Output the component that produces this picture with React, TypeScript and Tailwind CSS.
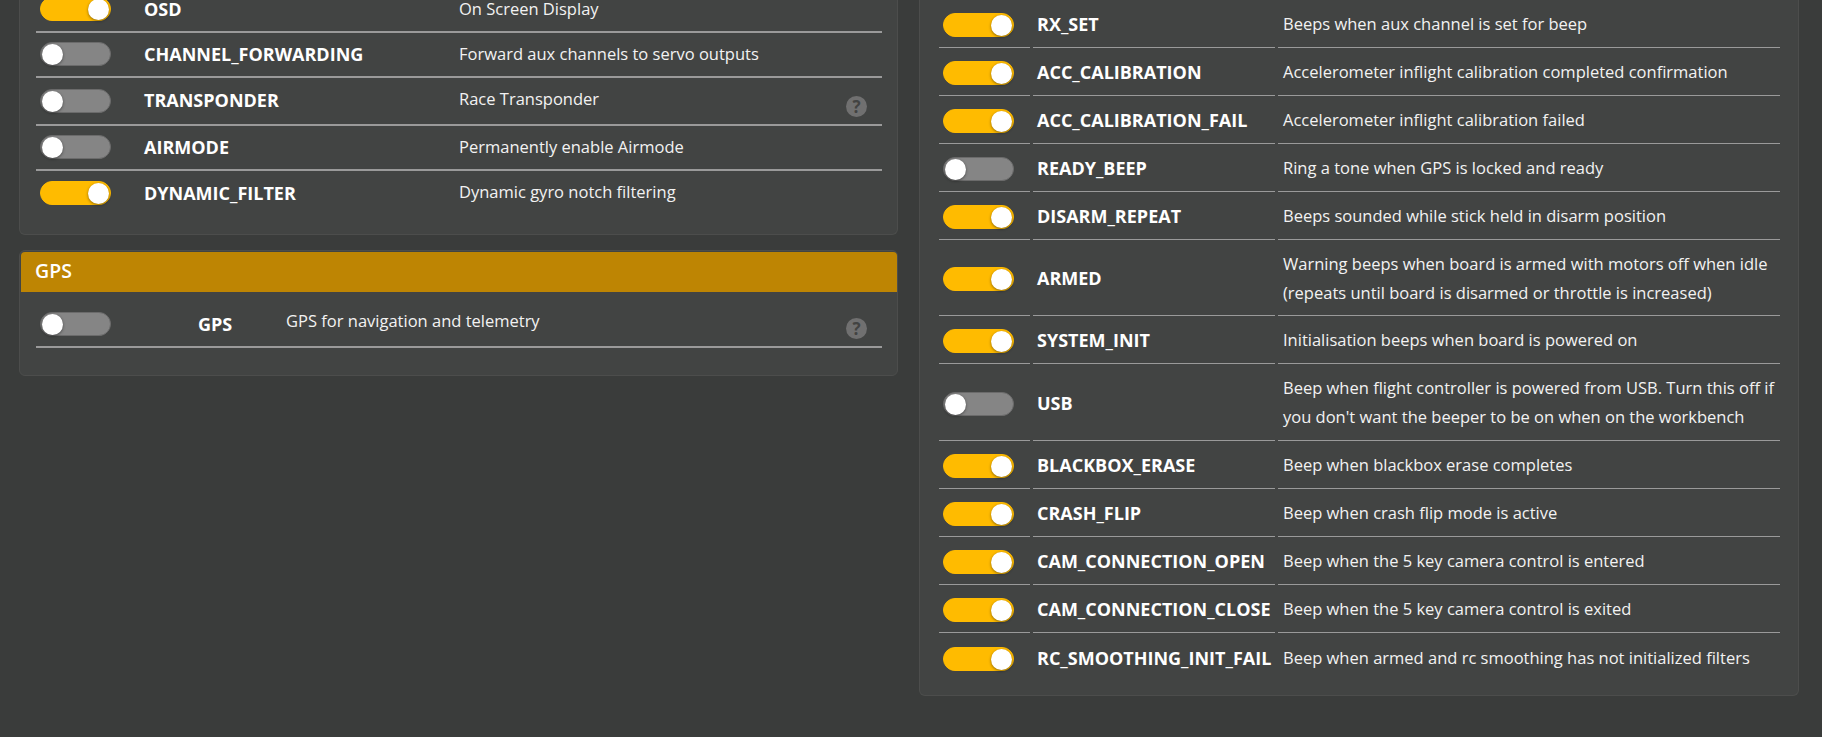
import React from 'react'

type Feature = { on: boolean; name: string; desc: string; help?: boolean; h: string }
type Beep = { on: boolean; name: string; desc: React.ReactNode; h?: string }

const features: Feature[] = [
  { on: true, name: 'OSD', desc: 'On Screen Display', h: 'h-[45px]' },
  { on: false, name: 'CHANNEL_FORWARDING', desc: 'Forward aux channels to servo outputs', h: 'h-[45px]' },
  { on: false, name: 'TRANSPONDER', desc: 'Race Transponder', help: true, h: 'h-[48px]' },
  { on: false, name: 'AIRMODE', desc: 'Permanently enable Airmode', h: 'h-[45px]' },
]

const beeps: Beep[] = [
  { on: true, name: 'RX_SET', desc: 'Beeps when aux channel is set for beep' },
  { on: true, name: 'ACC_CALIBRATION', desc: 'Accelerometer inflight calibration completed confirmation' },
  { on: true, name: 'ACC_CALIBRATION_FAIL', desc: 'Accelerometer inflight calibration failed' },
  { on: false, name: 'READY_BEEP', desc: 'Ring a tone when GPS is locked and ready' },
  { on: true, name: 'DISARM_REPEAT', desc: 'Beeps sounded while stick held in disarm position' },
  { on: true, name: 'ARMED', h: 'h-[76px]', desc: <>Warning beeps when board is armed with motors off when idle<br />(repeats until board is disarmed or throttle is increased)</> },
  { on: true, name: 'SYSTEM_INIT', desc: 'Initialisation beeps when board is powered on' },
  { on: false, name: 'USB', h: 'h-[77px]', desc: <>Beep when flight controller is powered from USB. Turn this off if<br />you don't want the beeper to be on when on the workbench</> },
  { on: true, name: 'BLACKBOX_ERASE', desc: 'Beep when blackbox erase completes' },
  { on: true, name: 'CRASH_FLIP', desc: 'Beep when crash flip mode is active' },
  { on: true, name: 'CAM_CONNECTION_OPEN', desc: 'Beep when the 5 key camera control is entered' },
  { on: true, name: 'CAM_CONNECTION_CLOSE', desc: 'Beep when the 5 key camera control is exited' },
  { on: true, name: 'RC_SMOOTHING_INIT_FAIL', desc: 'Beep when armed and rc smoothing has not initialized filters' },
]

const Toggle = ({ on }: { on: boolean }) => (
  <div className={`relative h-6 w-[71px] shrink-0 rounded-full border ${on ? 'border-[#ffbb00] bg-[#ffbb00]' : 'border-[#6b6b6b] bg-[#858585]'}`}>
    <div className={`absolute top-px h-[21px] w-[21px] rounded-full bg-white shadow-[0_1px_3px_rgba(0,0,0,0.45)] ${on ? 'right-px' : 'left-px'}`} />
  </div>
)

const Help = ({ className }: { className: string }) => (
  <div className={`absolute right-[15px] flex h-[21px] w-[21px] items-center justify-center rounded-full bg-[#707070] text-[17px] font-bold leading-none text-[#424342] ${className}`}>?</div>
)

const App = () => {
  return (
    <div className="flex h-[737px] items-start gap-[21px] overflow-hidden bg-[#3a3c3b] pl-[19px] pr-6 font-['Open_Sans',sans-serif] text-[#f2f2f2]">
      <div className="-mt-3 flex w-[879px] shrink-0 flex-col gap-[15px]">
        <div className="rounded-b-md border border-t-0 border-[#4c4d4c] bg-[#424443] pb-[18px] pl-4 pr-[15px]">
          {features.map((f) => (
            <div key={f.name} className={`relative flex border-b-2 border-[#9a9a9a] ${f.h}`}>
              <div className="flex w-[108px] shrink-0 items-center pb-px pl-1"><Toggle on={f.on} /></div>
              <div className="flex w-[315px] shrink-0 items-center pb-px text-[18px] font-bold text-white">{f.name}</div>
              <div className="pt-[9px] text-[16.5px] leading-[24px]">{f.desc}</div>
              {f.help && <Help className="top-[18px]" />}
            </div>
          ))}
          <div className="flex h-[45px]">
            <div className="flex w-[108px] shrink-0 items-center pb-px pl-1"><Toggle on /></div>
            <div className="flex w-[315px] shrink-0 items-center pb-px text-[18px] font-bold text-white">DYNAMIC_FILTER</div>
            <div className="pt-[9px] text-[16.5px] leading-[24px]">Dynamic gyro notch filtering</div>
          </div>
        </div>

        <div className="rounded-md border border-[#4c4d4c] bg-[#424443] pb-[27px] pl-px pt-px">
          <div className="flex h-10 items-center rounded-t-[4px] bg-[#be8503] pb-[2px] pl-[14px] text-[19.5px] font-semibold text-white">GPS</div>
          <div className="relative ml-[15px] mr-[15px] mt-[10px] flex h-[46px] border-b-2 border-[#9a9a9a]">
            <div className="flex w-[108px] shrink-0 items-center pl-1"><Toggle on={false} /></div>
            <div className="flex w-[142px] shrink-0 items-center pl-[54px] text-[18px] font-bold text-white">GPS</div>
            <div className="pt-[7px] text-[16.5px] leading-[24px]">GPS for navigation and telemetry</div>
            <Help className="top-[16px]" />
          </div>
        </div>
      </div>

      <div className="w-[880px] shrink-0 rounded-b-md border border-t-0 border-[#4c4d4c] bg-[#424443] pb-[14px] pl-[19px] pr-[18px]">
        {beeps.map((b, i) => {
          const last = i === beeps.length - 1
          const line = last ? '' : 'border-b border-[#9a9a9a]'
          return (
            <div key={b.name} className={`flex gap-[3px] ${b.h ?? 'h-12'}`}>
              <div className={`flex w-[91px] shrink-0 items-center pl-[4px] pt-[3px] ${line}`}><Toggle on={b.on} /></div>
              <div className={`flex w-[242px] shrink-0 items-center whitespace-nowrap pl-[4px] pt-[2px] text-[18px] font-bold text-white ${line}`}>{b.name}</div>
              <div className={`flex flex-1 items-center whitespace-nowrap pl-[5px] text-[16.5px] leading-[29px] ${line}`}><span>{b.desc}</span></div>
            </div>
          )
        })}
      </div>
    </div>
  )
}

export default App
